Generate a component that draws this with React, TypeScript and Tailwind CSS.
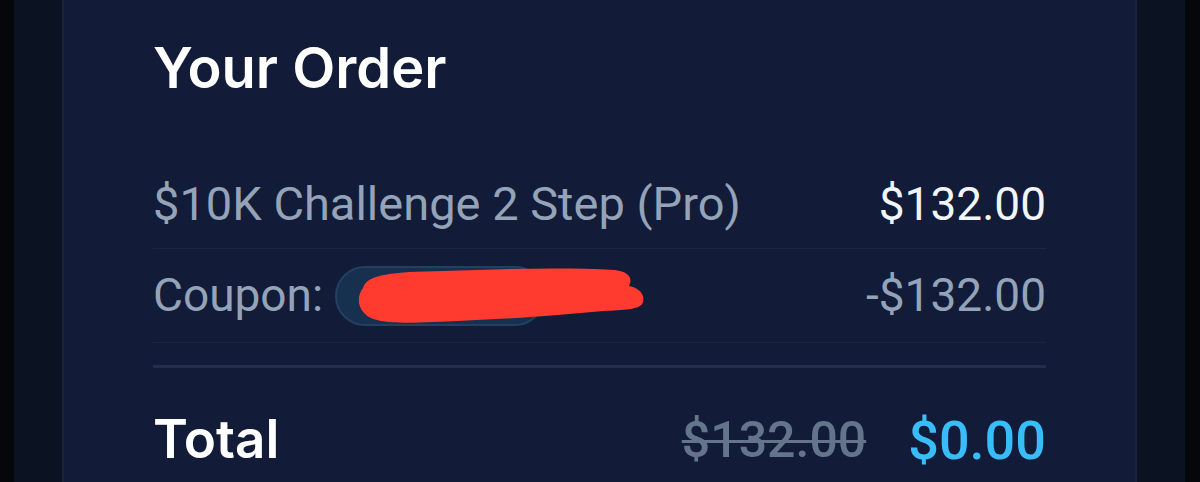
import React from "react";

const body = { fontFamily: "Roboto, 'Liberation Sans', sans-serif" };
const head = { fontFamily: "Inter, 'Liberation Sans', sans-serif" };

function Scribble() {
  return (
    <svg
      className="pointer-events-none absolute left-[16px] top-[-4px]"
      width="292"
      height="64"
      viewBox="0 0 292 64"
    >
      <path
        d="M10 24 C14 10 40 8 90 7 C150 5 210 3 262 6 C276 8 280 14 276 22 C286 24 292 30 290 38 C288 46 270 46 250 47 C200 52 140 56 80 58 C40 60 20 58 12 50 C4 42 4 32 10 24 Z"
        fill="#ff3b30"
      />
    </svg>
  );
}

export default function App() {
  return (
    <div className="flex h-[482px] w-[1200px] overflow-hidden bg-[#05070b] pl-[14px] pr-[15px]">
      <div className="flex flex-1 bg-[#0b1222] px-[48px]">
        <div className="flex-1 border-x-2 border-[#18223a] bg-[#121c38] px-[89px] pt-[36px]">
          <h1 className="text-[56px] font-semibold leading-[64px] text-white" style={head}>
            Your Order
          </h1>

          <div className="mt-[60px]" style={body}>
            <div className="flex h-[89px] items-center justify-between border-b border-[#1a2541]">
              <span className="text-[47px] text-[#94a3b8]">$10K Challenge 2 Step (Pro)</span>
              <span className="text-[46px] text-[#f1f5f9]">$132.00</span>
            </div>

            <div className="flex h-[94px] items-center justify-between border-b border-[#1a2541]">
              <div className="flex items-center gap-[12px]">
                <span className="text-[46px] text-[#94a3b8]">Coupon:</span>
                <div className="relative h-[60px] w-[210px] rounded-full border-2 border-[#24405f] bg-[#17304f]">
                  <Scribble />
                </div>
              </div>
              <span className="text-[46px] text-[#94a3b8]">-$132.00</span>
            </div>

            <div className="mt-[22px] h-[3px] bg-[#222e4b]" />

            <div className="flex h-[144px] items-center justify-between">
              <span className="text-[53px] font-semibold text-white" style={head}>
                Total
              </span>
              <div className="flex items-center gap-[42px]">
                <span className="text-[50px] font-medium text-[#64748b] line-through decoration-[3px]">
                  $132.00
                </span>
                <span className="text-[54px] font-medium text-[#38bdf8]">$0.00</span>
              </div>
            </div>
          </div>
        </div>
      </div>
    </div>
  );
}
